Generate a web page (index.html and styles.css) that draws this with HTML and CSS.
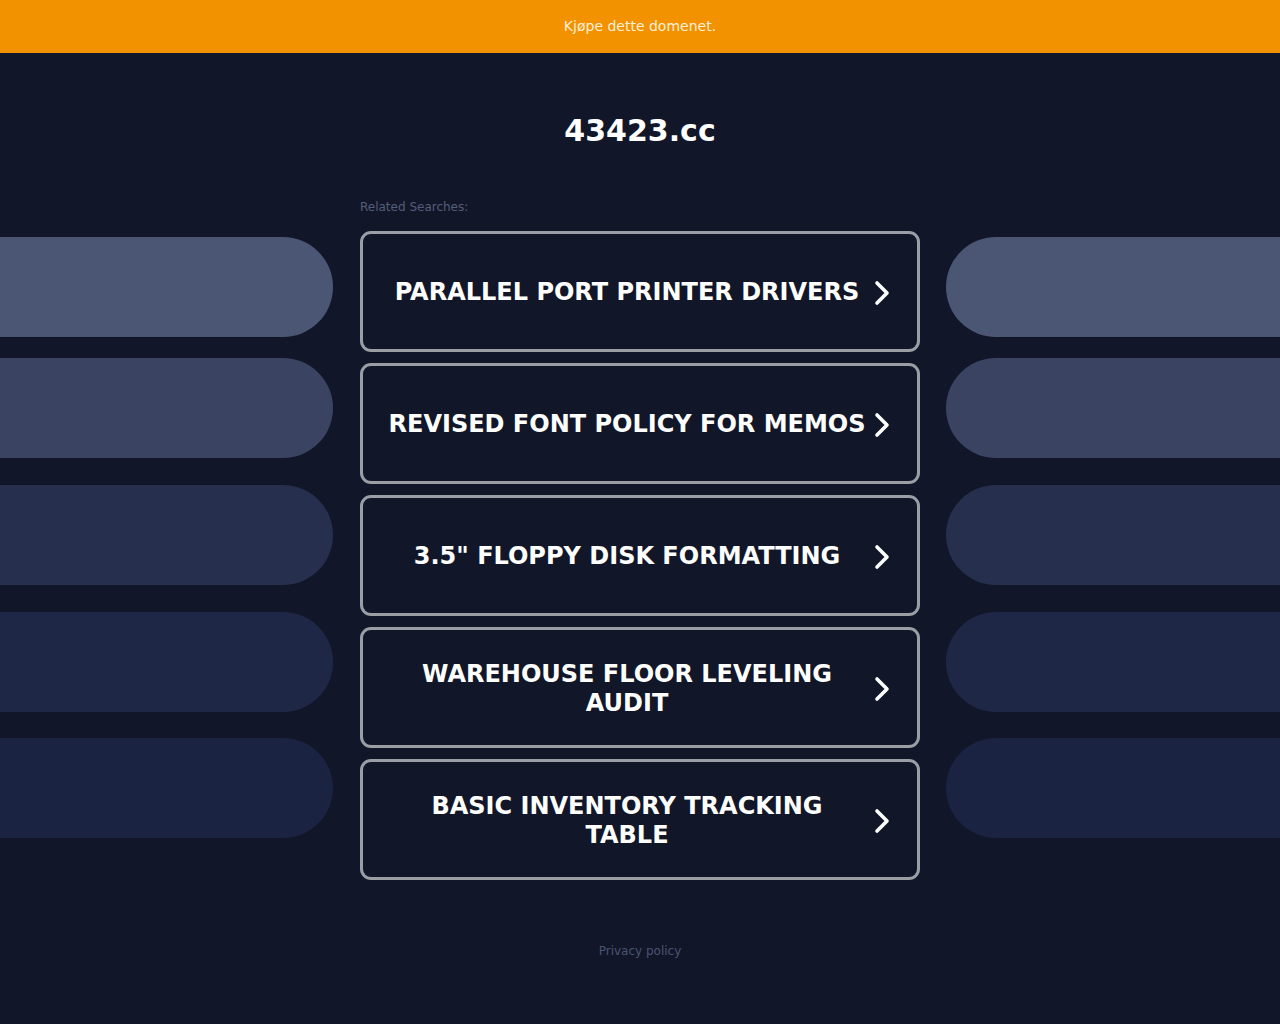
FILE: index.html
```html
<!DOCTYPE html>
<html lang="no">
<head>
<meta charset="utf-8">
<title>43423.cc</title>
<link rel="stylesheet" href="styles.css">
</head>
<body>
<div class="topbar"><a class="buy" href="#">Kjøpe dette domenet.</a></div>
<main class="page">
  <h1 class="domain">43423.cc</h1>
  <div class="layout">
    <div class="side side-left">
      <div class="pill p1"></div>
      <div class="pill p2"></div>
      <div class="pill p3"></div>
      <div class="pill p4"></div>
      <div class="pill p5"></div>
    </div>
    <div class="center">
      <div class="label">Related Searches:</div>
      <a class="link" href="#"><span class="text">PARALLEL PORT PRINTER DRIVERS</span><svg class="chev" viewBox="0 0 16 26" width="16" height="26"><polyline points="3,3 13,13 3,23"/></svg></a>
      <a class="link" href="#"><span class="text">REVISED FONT POLICY FOR MEMOS</span><svg class="chev" viewBox="0 0 16 26" width="16" height="26"><polyline points="3,3 13,13 3,23"/></svg></a>
      <a class="link" href="#"><span class="text">3.5" FLOPPY DISK FORMATTING</span><svg class="chev" viewBox="0 0 16 26" width="16" height="26"><polyline points="3,3 13,13 3,23"/></svg></a>
      <a class="link" href="#"><span class="text">WAREHOUSE FLOOR LEVELING AUDIT</span><svg class="chev" viewBox="0 0 16 26" width="16" height="26"><polyline points="3,3 13,13 3,23"/></svg></a>
      <a class="link" href="#"><span class="text">BASIC INVENTORY TRACKING TABLE</span><svg class="chev" viewBox="0 0 16 26" width="16" height="26"><polyline points="3,3 13,13 3,23"/></svg></a>
    </div>
    <div class="side side-right">
      <div class="pill p1"></div>
      <div class="pill p2"></div>
      <div class="pill p3"></div>
      <div class="pill p4"></div>
      <div class="pill p5"></div>
    </div>
  </div>
  <footer class="footer"><a href="#">Privacy policy</a></footer>
</main>
</body>
</html>
```

FILE: styles.css
```css
html, body {
  margin: 0;
  padding: 0;
}
body {
  background: #111729;
  font-family: "DejaVu Sans", "Liberation Sans", sans-serif;
  min-height: 1024px;
  overflow-x: hidden;
}
a {
  text-decoration: none;
}
.topbar {
  box-sizing: border-box;
  height: 53px;
  padding-bottom: 1px;
  background: #f39200;
  display: flex;
  align-items: center;
  justify-content: center;
}
.buy {
  color: #fdefd8;
  font-size: 14px;
  line-height: 16px;
}
.page {
  display: flex;
  flex-direction: column;
}
.domain {
  margin: 60px 0 0;
  text-align: center;
  color: #ffffff;
  font-size: 30px;
  line-height: 36px;
  font-weight: bold;
}
.layout {
  margin-top: 51px;
  display: grid;
  grid-template-columns: 333px 560px 1fr;
  column-gap: 27px;
}
.side {
  display: flex;
  flex-direction: column;
  padding-top: 37px;
}
.pill {
  height: 100px;
}
.side-left .pill {
  border-radius: 0 50px 50px 0;
}
.side-right .pill {
  border-radius: 50px 0 0 50px;
  margin-left: -1px;
}
.p1 { background: #4b5675; }
.p2 { background: #3a4462; margin-top: 21px; }
.p3 { background: #272f4e; margin-top: 27px; }
.p4 { background: #1f2746; margin-top: 27px; }
.p5 { background: #1b2342; margin-top: 26px; }

.center {
  display: flex;
  flex-direction: column;
}
.label {
  color: #555d79;
  font-size: 12px;
  line-height: 14px;
  margin-bottom: 17px;
}
.link {
  box-sizing: border-box;
  height: 121px;
  margin-bottom: 11px;
  border: 3px solid #9b9ea5;
  border-radius: 11px;
  display: flex;
  align-items: center;
  padding: 2px 27px 0 24px;
  color: #ffffff;
}
.link:last-child {
  margin-bottom: 0;
}
.text {
  width: 480px;
  flex: none;
  text-align: center;
  font-weight: bold;
  font-size: 24px;
  line-height: 29px;
  margin-right: 7px;
}
.chev {
  flex: none;
  display: block;
}
.chev polyline {
  fill: none;
  stroke: #ffffff;
  stroke-width: 3.6;
  stroke-linecap: round;
  stroke-linejoin: round;
}
.footer {
  margin-top: 64px;
  text-align: center;
  font-size: 12px;
  line-height: 14px;
}
.footer a {
  color: #4b5372;
}
```
